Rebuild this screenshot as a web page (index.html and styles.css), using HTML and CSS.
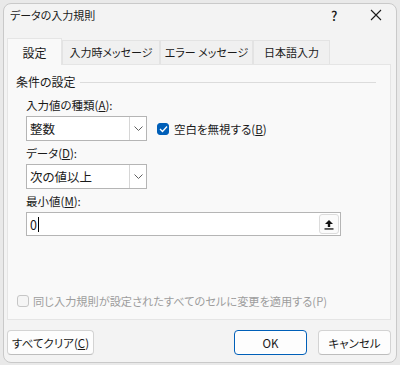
FILE: index.html
```html
<!DOCTYPE html>
<html lang="ja">
<head>
    <meta charset="UTF-8">
    <title>データの入力規則</title>
    <link rel="stylesheet" href="styles.css">
</head>
<body>
    <div class="dialog">
        <div class="titlebar">
            <span class="title">データの入力規則</span>
            <span class="help">?</span>
            <span class="close">
                <svg width="12" height="12" viewBox="0 0 12 12"><path d="M1 1 L11 11 M11 1 L1 11" stroke="#1a1a1a" stroke-width="1.1" fill="none"/></svg>
            </span>
        </div>

        <div class="tabs">
            <div class="tab active">設定</div>
            <div class="tab">入力時メッセージ</div>
            <div class="tab">エラー メッセージ</div>
            <div class="tab">日本語入力</div>
        </div>

        <div class="panel">
            <div class="group-title">
                <span>条件の設定</span>
                <div class="group-line"></div>
            </div>

            <div class="field">
                <div class="label">入力値の種類(<u>A</u>):</div>
                <div class="row">
                    <div class="select">
                        <span class="select-value">整数</span>
                        <span class="select-btn">
                            <svg width="9" height="5" viewBox="0 0 9 5"><path d="M0.5 0.5 L4.5 4.5 L8.5 0.5" stroke="#606060" fill="none"/></svg>
                        </span>
                    </div>
                    <label class="check">
                        <span class="box checked">
                            <svg width="9" height="8" viewBox="0 0 9 8"><path d="M1 4 L3.5 6.5 L8 1.5" stroke="#fff" stroke-width="1.3" fill="none"/></svg>
                        </span>
                        <span>空白を無視する(<u>B</u>)</span>
                    </label>
                </div>
            </div>

            <div class="field">
                <div class="label">データ(<u>D</u>):</div>
                <div class="select">
                    <span class="select-value">次の値以上</span>
                    <span class="select-btn">
                        <svg width="9" height="5" viewBox="0 0 9 5"><path d="M0.5 0.5 L4.5 4.5 L8.5 0.5" stroke="#606060" fill="none"/></svg>
                    </span>
                </div>
            </div>

            <div class="field">
                <div class="label">最小値(<u>M</u>):</div>
                <div class="input">
                    <span class="input-value">0</span><span class="caret"></span>
                    <span class="ref-btn">
                        <svg width="10" height="11" viewBox="0 0 10 11"><path d="M5 1 L9 5 L6.2 5 L6.2 8 L3.8 8 L3.8 5 L1 5 Z" fill="#111"/><rect x="0.5" y="9.3" width="9" height="1.3" fill="#111"/></svg>
                    </span>
                </div>
            </div>

            <label class="check disabled apply-all">
                <span class="box"></span>
                <span>同じ入力規則が設定されたすべてのセルに変更を適用する(P)</span>
            </label>
        </div>

        <div class="footer">
            <button class="btn clear">すべてクリア(<u>C</u>)</button>
            <div class="spacer"></div>
            <button class="btn default">OK</button>
            <button class="btn">キャンセル</button>
        </div>
    </div>
</body>
</html>
```

FILE: styles.css
```css
* {
    box-sizing: border-box;
}

body {
    margin: 0;
    padding: 3px;
    background: #e9e9e9;
    font-family: 'Noto Sans CJK JP', 'Noto Sans', sans-serif;
    font-feature-settings: "palt";
    font-size: 11px;
    color: #1a1a1a;
}

.dialog {
    width: 394px;
    height: 360px;
    background: #f3f3f3;
    border: 1px solid #c9c9c9;
    border-radius: 8px;
    display: flex;
    flex-direction: column;
}

.titlebar {
    height: 22px;
    display: flex;
    align-items: center;
    padding-left: 6px;
}

.title {
    flex: 1;
    font-size: 11px;
}

.help {
    width: 14px;
    margin-right: 25px;
    font-size: 13px;
    font-weight: 500;
}

.close {
    width: 12px;
    margin-right: 14px;
    display: flex;
}

.tabs {
    display: flex;
    align-items: flex-end;
    margin-top: 12px;
    padding-left: 3px;
    height: 26px;
}

.tab {
    height: 24px;
    line-height: 23px;
    padding: 0;
    background: #f0f0f0;
    border: 1px solid #e3e3e3;
    border-bottom: none;
    text-align: center;
    white-space: nowrap;
}

.tab:nth-child(2) { width: 98px; }
.tab:nth-child(3) { width: 93px; }
.tab:nth-child(4) { width: 77px; }

.tab.active {
    width: 55px;
    height: 27px;
    line-height: 27px;
    font-size: 12px;
    background: #f9f9f9;
    border-color: #e5e5e5;
    margin-bottom: -1px;
    position: relative;
    z-index: 1;
}

.panel {
    height: 256px;
    margin: 0 5px 0 3px;
    background: #f9f9f9;
    border: 1px solid #e5e5e5;
    padding: 9px 8px 0 8px;
    display: flex;
    flex-direction: column;
}

.group-title {
    display: flex;
    align-items: center;
    height: 16px;
    line-height: 16px;
    font-size: 12px;
}

.group-line {
    flex: 1;
    height: 1px;
    background: #dcdcdc;
    margin: 0 6px 0 4px;
}

.field {
    padding-left: 10px;
    margin-top: 4px;
}

.field:nth-child(2) {
    margin-top: 7px;
}

.label {
    height: 16px;
    line-height: 16px;
    margin-bottom: 3px;
    font-size: 11.5px;
}

.row {
    display: flex;
    align-items: center;
}

.select {
    width: 121px;
    height: 25px;
    background: #fff;
    border: 1px solid #b5b5b5;
    display: flex;
}

.select-value {
    flex: 1;
    padding-left: 3px;
    line-height: 23px;
    font-size: 12.5px;
}

.select-btn {
    width: 17px;
    border-left: 1px solid #d6d6d6;
    display: flex;
    align-items: center;
    justify-content: center;
}

.check {
    display: flex;
    align-items: center;
    gap: 5px;
    margin-left: 10px;
    font-size: 11.5px;
}

.box {
    width: 12px;
    height: 12px;
    border-radius: 3px;
    border: 1px solid #c6c6c6;
    background: #f5f5f5;
    display: flex;
    align-items: center;
    justify-content: center;
}

.box.checked {
    background: #005fb8;
    border-color: #005fb8;
}

.input {
    width: 315px;
    height: 24px;
    background: #fff;
    border: 1px solid #b5b5b5;
    display: flex;
    align-items: center;
    padding-left: 3px;
}

.input-value {
    font-size: 12.5px;
}

.caret {
    width: 1px;
    height: 15px;
    background: #000;
    margin-left: 1px;
}

.ref-btn {
    margin-left: auto;
    margin-right: 1px;
    width: 20px;
    height: 20px;
    border: 1px solid #dcdcdc;
    border-radius: 3px;
    background: #fbfbfb;
    display: flex;
    align-items: center;
    justify-content: center;
}

.apply-all {
    margin-top: auto;
    margin-bottom: 10px;
    margin-left: 1px;
    gap: 4px;
    font-size: 11.2px;
}

.disabled {
    color: #9d9d9d;
}

.footer {
    display: flex;
    align-items: center;
    margin-top: 10px;
    padding: 0 5px 0 3px;
    gap: 11px;
}

.spacer {
    flex: 1;
}

.btn {
    height: 25px;
    min-width: 73px;
    padding: 0;
    font-family: inherit;
    font-feature-settings: "palt";
    font-size: 11.5px;
    color: #1a1a1a;
    background: #fdfdfd;
    border: 1px solid #d3d3d3;
    border-bottom-color: #bdbdbd;
    border-radius: 4px;
    white-space: nowrap;
}

.btn.clear {
    width: 87px;
}

.btn.default {
    border: 1px solid #005fb8;
    box-shadow: inset 0 0 0 1px #fff;
}
```
